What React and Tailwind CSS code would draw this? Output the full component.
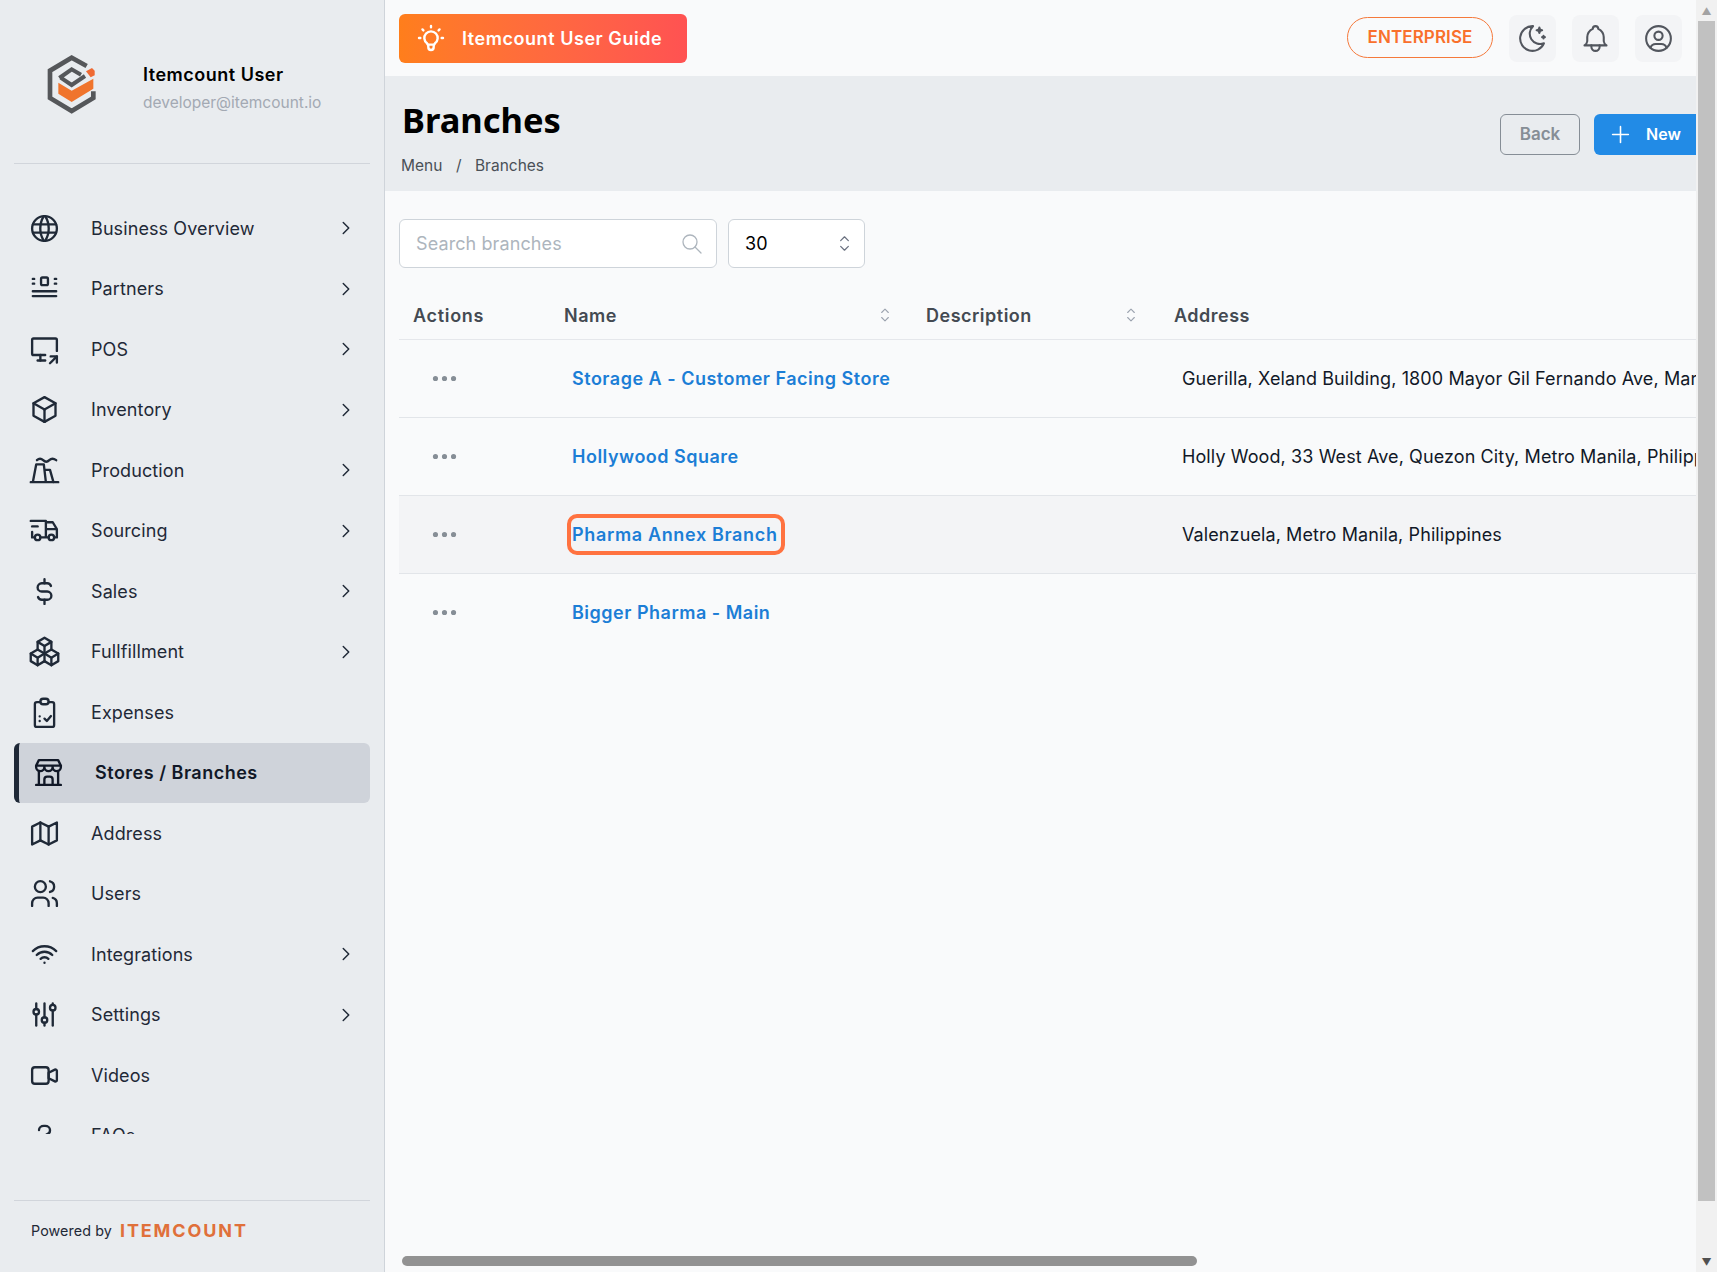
import React from 'react';
import {
  TbWorld, TbDeviceDesktopShare, TbBox, TbTruckDelivery, TbCurrencyDollar, TbPackages,
  TbBuildingStore, TbMap, TbUsers, TbWifi, TbAdjustments, TbVideo, TbQuestionMark, TbChevronRight,
  TbBulb, TbMoonStars, TbBell, TbUserCircle, TbPlus, TbSearch, TbSelector, TbDots,
} from 'react-icons/tb';

function PartnersIcon({ className }) {
  return (
    <svg className={className} viewBox="0 0 24 24" fill="none" stroke="currentColor" strokeWidth="1.7" strokeLinecap="round">
      <rect x="9.5" y="4" width="5" height="5.500" rx="1" />
      <path d="M3.500 5h1M3.500 8.500h1M19.500 5h1M19.500 8.500h1M3.500 14h17M3.500 17.500h17" />
    </svg>
  );
}

function ProductionIcon({ className }) {
  return (
    <svg className={className} viewBox="0 0 24 24" fill="none" stroke="currentColor" strokeWidth="1.7" strokeLinecap="round" strokeLinejoin="round">
      <path d="M2 20.500h20M3.500 20.500 6 7.500h5.500l1.500 13M12 11.500h4l2.500 9" />
      <path d="M6.500 4.500c1.500-1.500 3-1.500 4.500 0s3 1.500 4.500 0 3-1.500 5 0" />
    </svg>
  );
}

function ClipboardIcon({ className }) {
  return (
    <svg className={className} viewBox="0 0 24 24" fill="none" stroke="currentColor" strokeWidth="1.7" strokeLinecap="round" strokeLinejoin="round">
      <path d="M9 4.500H6.500A1.500 1.500 0 0 0 5 6v15a1.500 1.500 0 0 0 1.500 1.500h11A1.500 1.500 0 0 0 19 21V6a1.500 1.500 0 0 0-1.500-1.500H15" />
      <rect x="9" y="2" width="6" height="4" rx="2" />
      <path d="M8.500 14.800h.01M8.500 18.200h.01M12 16.500l1.700 1.700 3-3.600" />
    </svg>
  );
}

function Logo() {
  return (
    <svg width="90" height="80" viewBox="0 0 270 240" className="ml-[-18px] shrink-0">
      <path d="M170 72 125 47 60 86v82l65 39 65-39v-20" fill="none" stroke="#55575a" strokeWidth="14" />
      <path d="M88 108 125 82l28 16M92 107l33 22 40-27" fill="none" stroke="#55575a" strokeWidth="12" />
      <path d="M85 122l40 24 65-36v30l-65 40-40-25z" fill="#f0742c" />
      <path d="M168 88l18-10 8 8v14l-12 6z" fill="#ef6a33" />
    </svg>
  );
}

const navItems = [
  { label: 'Business Overview', icon: TbWorld, more: true },
  { label: 'Partners', icon: PartnersIcon, more: true },
  { label: 'POS', icon: TbDeviceDesktopShare, more: true },
  { label: 'Inventory', icon: TbBox, more: true },
  { label: 'Production', icon: ProductionIcon, more: true },
  { label: 'Sourcing', icon: TbTruckDelivery, more: true },
  { label: 'Sales', icon: TbCurrencyDollar, more: true },
  { label: 'Fullfillment', icon: TbPackages, more: true },
  { label: 'Expenses', icon: ClipboardIcon },
  { label: 'Stores / Branches', icon: TbBuildingStore, active: true },
  { label: 'Address', icon: TbMap },
  { label: 'Users', icon: TbUsers },
  { label: 'Integrations', icon: TbWifi, more: true },
  { label: 'Settings', icon: TbAdjustments, more: true },
  { label: 'Videos', icon: TbVideo },
  { label: 'FAQs', icon: TbQuestionMark },
];

const rows = [
  { name: 'Storage A - Customer Facing Store', address: 'Guerilla, Xeland Building, 1800 Mayor Gil Fernando Ave, Marikina, Metro Manila, Philippines' },
  { name: 'Hollywood Square', address: 'Holly Wood, 33 West Ave, Quezon City, Metro Manila, Philippines' },
  { name: 'Pharma Annex Branch', address: 'Valenzuela, Metro Manila, Philippines', focused: true },
  { name: 'Bigger Pharma - Main', address: '' },
];

function NavRow({ item }) {
  const Icon = item.icon;
  if (item.active) {
    return (
      <div className="flex h-[60.5px] items-center gap-[30px] rounded-md border-l-[5px] border-[#1f2937] bg-[#cfd3da] pl-[13px] text-[18px] font-semibold tracking-[0.5px] text-[#111827]">
        <Icon className="size-[33px] shrink-0 stroke-[1.7]" />
        <span>{item.label}</span>
      </div>
    );
  }
  return (
    <div className="flex h-[60.5px] items-center gap-[30px] pl-[14px] pr-[13px] text-[18px] text-[#1f2937]">
      <Icon className="size-[33px] shrink-0 stroke-[1.7]" />
      <span>{item.label}</span>
      {item.more && <TbChevronRight className="ml-auto size-[22px] shrink-0 stroke-[1.6]" />}
    </div>
  );
}

function Sidebar() {
  return (
    <aside className="flex h-full w-[385px] shrink-0 flex-col border-r border-[#cfd4da] bg-[#e9ecef] px-[14px]">
      <div className="flex h-[164px] shrink-0 items-center border-b border-[#d1d5db] pl-[34px]">
        <Logo />
        <div className="ml-[23px] mt-[14px]">
          <div className="text-[18px] font-semibold leading-[26px] tracking-[0.5px] text-black">Itemcount User</div>
          <div className="mt-[2px] text-[15.5px] leading-[26px] tracking-normal text-[#a3a9b3]">developer@itemcount.io</div>
        </div>
      </div>
      <nav className="mt-[34px] h-[936px] shrink-0 overflow-hidden">
        {navItems.map((item) => (
          <NavRow key={item.label} item={item} />
        ))}
      </nav>
      <div className="mt-[66px] flex items-center gap-[8px] border-t border-[#d1d5db] pl-[17px] pt-[16px]">
        <span className="text-[14.3px] text-[#1f2937]">Powered by</span>
        <span className="text-[18px] font-bold tracking-[1.9px] text-[#e0703a]">ITEMCOUNT</span>
      </div>
    </aside>
  );
}

function TopBar() {
  return (
    <header className="flex h-[76px] shrink-0 items-center justify-between pl-[14px] pr-[14px]">
      <div className="flex h-[49px] w-[288px] items-center gap-[15px] rounded-md bg-linear-to-r from-[#ff7e1b] to-[#ff5252] pl-[16px] text-[18px] font-semibold tracking-[0.55px] text-white">
        <TbBulb className="size-[32px] stroke-[1.8]" />
        <span>Itemcount User Guide</span>
      </div>
      <div className="flex items-center">
        <div className="-mt-[1px] flex h-[41px] w-[146px] items-center justify-center rounded-full border border-[#f5793b] text-[17px] font-semibold text-[#f9702c]">
          ENTERPRISE
        </div>
        <div className="ml-[16px] flex size-[47px] items-center justify-center rounded-lg bg-[#f3f4f6] text-[#52565e]">
          <TbMoonStars className="size-[33px] stroke-[1.5]" />
        </div>
        <div className="ml-[16px] flex size-[47px] items-center justify-center rounded-lg bg-[#f3f4f6] text-[#52565e]">
          <TbBell className="size-[33px] stroke-[1.5]" />
        </div>
        <div className="ml-[16px] flex size-[47px] items-center justify-center rounded-lg bg-[#f3f4f6] text-[#52565e]">
          <TbUserCircle className="size-[33px] stroke-[1.5]" />
        </div>
      </div>
    </header>
  );
}

function TitleBand() {
  return (
    <section className="flex h-[115px] shrink-0 items-start justify-between bg-[#e9ecef] pl-[16px]">
      <div>
        <h1 className="mt-[19px] pl-[1px] font-['Noto_Sans'] text-[34.5px] font-bold leading-[50px] tracking-normal text-black">Branches</h1>
        <div className="mt-[9px] flex gap-[13.5px] text-[15.5px] leading-[24px] tracking-normal text-[#495057]">
          <span>Menu</span>
          <span>/</span>
          <span>Branches</span>
        </div>
      </div>
      <div className="mt-[38px] flex items-center gap-[14px]">
        <div className="flex h-[41px] w-[80px] items-center justify-center rounded-md border border-[#868e96] text-[17px] font-semibold tracking-normal text-[#868e96]">
          Back
        </div>
        <div className="flex h-[41px] w-[102px] items-center gap-[12.5px] rounded-l-md bg-[#228be6] pb-[1px] pl-[12.5px] text-[16px] font-semibold text-white">
          <TbPlus className="size-[27px] stroke-[1.4]" />
          <span>New</span>
        </div>
      </div>
    </section>
  );
}

function Filters() {
  return (
    <div className="flex gap-[11px]">
      <div className="flex h-[49px] w-[318px] items-center justify-between rounded-md border border-[#ced4da] bg-white pl-[16px] pr-[12px] text-[18px] text-[#adb5bd]">
        <span>Search branches</span>
        <TbSearch className="size-[24px] stroke-[1.3]" />
      </div>
      <div className="flex h-[49px] w-[137px] items-center justify-between rounded-md border border-[#ced4da] bg-white pl-[16px] pr-[8px] text-[18px] text-black">
        <span>30</span>
        <TbSelector className="size-[23px] stroke-[1.3] text-[#6b7280]" />
      </div>
    </div>
  );
}

function BranchTable() {
  return (
    <div className="mt-[23px] w-full">
      <div className="flex h-[49px] items-center border-b border-[#e5e7eb] text-[18px] font-semibold tracking-[0.5px] text-[#444a52]">
        <div className="w-[152px] shrink-0 pl-[14px] tracking-[0.7px]">Actions</div>
        <div className="flex w-[362px] shrink-0 items-center justify-between pl-[13px] pr-[18px]">
          <span>Name</span>
          <TbSelector className="size-[20px] stroke-[1.3] text-[#9ca3af]" />
        </div>
        <div className="flex w-[248px] shrink-0 items-center justify-between pl-[13px] pr-[20px]">
          <span>Description</span>
          <TbSelector className="size-[20px] stroke-[1.3] text-[#9ca3af]" />
        </div>
        <div className="pl-[13px]">Address</div>
      </div>
      {rows.map((row) => (
        <div
          key={row.name}
          className={`flex h-[78px] items-center border-b text-[18px] ${row.address ? 'border-[#e2e5e9]' : 'border-transparent'} ${row.focused ? 'bg-[#f3f4f6]' : ''}`}
        >
          <div className="w-[152px] shrink-0 pl-[30px]">
            <TbDots className="size-[31px] fill-[#868e96] text-[#868e96]" />
          </div>
          <div className="w-[362px] shrink-0 pl-[21px]">
            <span className={`whitespace-nowrap font-semibold text-[#1c7ed6] ${row.focused ? '-ml-[1px] inline-block rounded-md pl-[1px] pr-[3px] leading-[33px] tracking-[0.65px] outline-[4px] outline-[#ff7240]' : 'tracking-[0.5px]'}`}>
              {row.name}
            </span>
          </div>
          <div className="w-[248px] shrink-0" />
          <div className="whitespace-nowrap pl-[21px] text-[#111827]">{row.address}</div>
        </div>
      ))}
    </div>
  );
}

function PageScrollbar() {
  return (
    <div className="flex h-full w-[21px] shrink-0 flex-col items-center bg-[#f1f1f1]">
      <div className="flex h-[21px] items-center justify-center text-[10px] leading-none text-[#a3a3a3]">▲</div>
      <div className="h-[1180px] w-[17px] bg-[#c1c1c1]" />
      <div className="mt-auto flex h-[21px] items-center justify-center text-[10px] leading-none text-[#505050]">▼</div>
    </div>
  );
}

export default function App() {
  return (
    <div className="flex h-[1272px] w-[1717px] overflow-hidden bg-[#f9fafb] font-[Inter,sans-serif] tracking-[0.1px]">
      <Sidebar />
      <main className="flex min-w-0 flex-1 flex-col overflow-hidden">
        <TopBar />
        <TitleBand />
        <div className="min-h-0 flex-1 overflow-hidden pl-[14px] pt-[28px]">
          <Filters />
          <BranchTable />
        </div>
        <div className="mb-[6px] ml-[17px] h-[10px] w-[795px] shrink-0 rounded-full bg-[#929292]" />
      </main>
      <PageScrollbar />
    </div>
  );
}
